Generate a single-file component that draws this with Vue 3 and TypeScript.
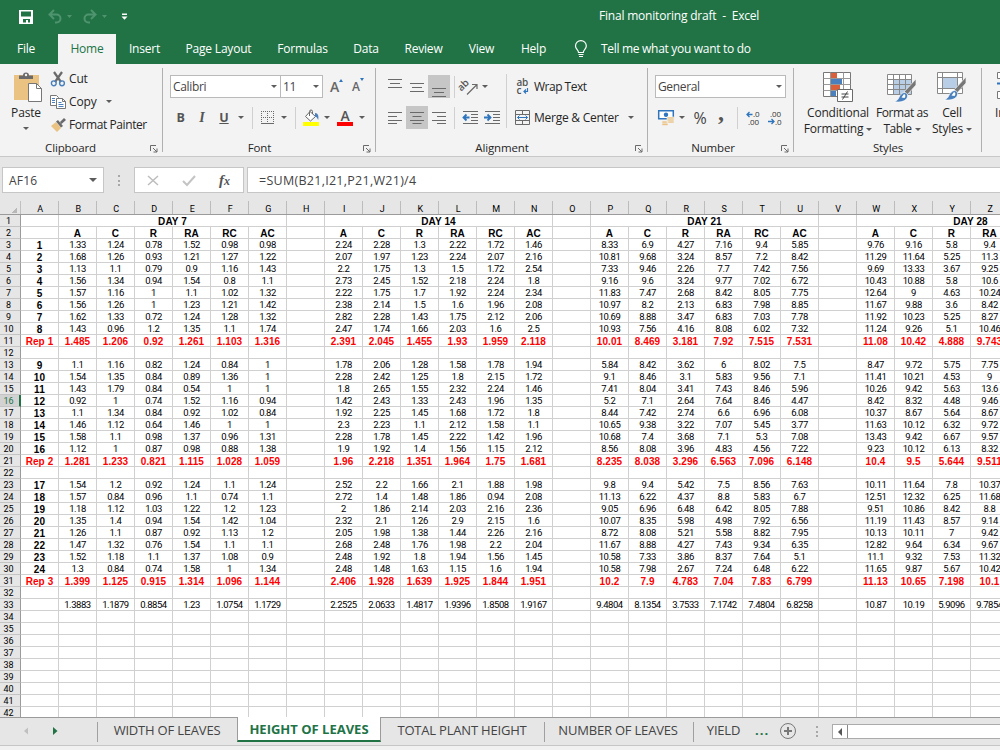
<template>
    <div class="excel">
        <header class="titlebar">
            <svg class="qat" width="140" height="34" viewBox="0 0 140 34">
                <path d="M19 10h14v14H19z" fill="#fff" />
                <path d="M21 11.500h10v5H21zM23 19h7v3.500h-2V20h-2v2.500h-3z" fill="#217346" />
                <g fill="none" stroke="#4f946e" stroke-width="2">
                    <path d="M54 10l-4.500 4.500L54 19M50 14.500h6.500a4 4 0 0 1 0 8H55" />
                    <path d="M91 10l4.500 4.500L91 19M95 14.500h-6.500a4 4 0 0 0 0 8H90" />
                </g>
                <path d="M67 15h5l-2.500 3zM102 15h5l-2.500 3z" fill="#4f946e" />
                <path d="M122 13.500h5v1.500h-5zM121.500 16.500h6l-3 3.300z" fill="#fff" />
            </svg>
            <span class="title">Final monitoring draft&nbsp; -&nbsp; Excel</span>
        </header>

        <nav class="tabs">
            <span v-for="tab in tabs" :key="tab.name" class="tab" :class="{ active: tab.name === 'Home' }" :style="{ width: tab.width + 'px' }">{{ tab.name }}</span>
            <svg class="bulb" width="14" height="18" viewBox="0 0 14 18" fill="none" stroke="#fff" stroke-width="1.200">
                <path d="M4.500 12.500c0-2.500-3-3.200-3-6.500a5.300 5.300 0 0 1 10.800 0c0 3.300-3 4-3 6.500zM4.500 14.500h5M5 16.500h4" />
            </svg>
            <span class="tell">Tell me what you want to do</span>
        </nav>

        <section class="ribbon">
            <div class="group clipboard">
                <div class="body">
                    <div class="paste">
                        <svg width="30" height="31" viewBox="0 0 30 31">
                            <path d="M1 3h25v25H1z" fill="#eac282" />
                            <path d="M6 7V3.500h4a3 3 0 0 1 6 0h4V7z" fill="#6a6a6a" />
                            <circle cx="13" cy="3" r="1.200" fill="#f3f3f3" />
                            <path d="M15.500 11.500h8l5 5v13h-13z" fill="#fff" stroke="#777" />
                            <path d="M23.500 11.500v5h5" fill="none" stroke="#777" />
                        </svg>
                        <span>Paste</span>
                        <i class="caret"></i>
                    </div>
                    <div class="clip-list">
                        <div class="clip-item">
                            <svg width="16" height="16" viewBox="0 0 16 16" fill="none">
                                <path d="M4 1l7 10M12 1L5 11" stroke="#6a6a6a" stroke-width="2.200" />
                                <circle cx="3.800" cy="12.300" r="2.400" stroke="#4a80bd" stroke-width="1.400" />
                                <circle cx="12" cy="12.300" r="2.400" stroke="#4a80bd" stroke-width="1.400" />
                            </svg>
                            <span>Cut</span>
                        </div>
                        <div class="clip-item">
                            <svg width="16" height="16" viewBox="0 0 16 16" stroke="#777" fill="#fff">
                                <path d="M.5 1.500h6l2 2v8h-8z" />
                                <path d="M6.500 4.500h6l3 3v7h-9z" />
                                <path d="M12.500 4.500v3h3" fill="none" />
                                <path d="M2 4.500h3M2 6.500h3M2 8.500h3M8.500 8.500h3M8.500 10.500h5M8.500 12.500h5" stroke="#4a80bd" />
                            </svg>
                            <span>Copy</span>
                            <i class="caret copy-caret"></i>
                        </div>
                        <div class="clip-item">
                            <svg width="16" height="16" viewBox="0 0 16 16">
                                <path d="M1 9l5-4 5 6-4 4z" fill="#eac282" />
                                <path d="M6 4.500l2-1.500 5 6-2 1.500zM10 5l4-4 2 2-4.500 4z" fill="#6a6a6a" />
                            </svg>
                            <span class="painter">Format Painter</span>
                        </div>
                    </div>
                </div>
                <div class="foot"><span>Clipboard</span><svg class="launcher" viewBox="0 0 8 8"><path d="M.5 6V.5H6M3 3l4 4M7 3.500V7H3.500" /></svg></div>
            </div>

            <div class="group font">
                <div class="body stack">
                    <div class="row">
                        <div class="combo face">Calibri<i class="caret"></i></div>
                        <div class="combo size">11<i class="caret"></i></div>
                        <span class="grow">A<i class="up"></i></span>
                        <span class="grow shrink">A<i class="down"></i></span>
                    </div>
                    <div class="row">
                        <b class="c w21">B</b>
                        <b class="c w22 italic">I</b>
                        <b class="c w22 underline">U</b>
                        <span class="c w12"><i class="caret"></i></span>
                        <span class="c w11"><i class="vline"></i></span>
                        <span class="c w20">
                            <svg width="14" height="14" viewBox="0 0 14 14" fill="none" stroke="#6a6a6a">
                                <path d="M.5 0v12M6.500 0v12M12.500 0v12M0 .5h13M0 6.500h13" stroke-dasharray="1 1" />
                                <path d="M0 12.500h13" />
                            </svg>
                        </span>
                        <span class="c w12"><i class="caret"></i></span>
                        <span class="c w11"><i class="vline"></i></span>
                        <span class="c w20">
                            <svg width="16" height="17" viewBox="0 0 16 17">
                                <path d="M7 2.500l5.500 5-5 4.500-5-4.500z" fill="#fff" stroke="#6a6a6a" />
                                <path d="M6.500 7V2.500a1.500 1.500 0 0 1 3 0V5" fill="none" stroke="#6a6a6a" />
                                <path d="M12 4c3 0 4 3 3.200 7-1-2-1.200-3-3.200-3.500z" fill="#4a80bd" />
                                <path d="M0 13h16v4H0z" fill="#ffff00" />
                            </svg>
                        </span>
                        <span class="c w12"><i class="caret"></i></span>
                        <span class="c w24"><span class="colour">A</span></span>
                        <span class="c w9"><i class="caret"></i></span>
                    </div>
                </div>
                <div class="foot"><span>Font</span><svg class="launcher" viewBox="0 0 8 8"><path d="M.5 6V.5H6M3 3l4 4M7 3.500V7H3.500" /></svg></div>
            </div>

            <div class="group align">
                <div class="body">
                    <div class="stack align-left">
                        <div class="row">
                            <span v-for="(d, i) in vAlign" :key="i" class="c w22 tall" :class="{ on: i === 2 }">
                                <svg width="14" height="21" viewBox="0 0 14 21" fill="none" stroke="#6a6a6a"><path :d="d" /></svg>
                            </span>
                            <span class="c w9"><i class="vline"></i></span>
                            <span class="c w21">
                                <svg width="18" height="17" viewBox="0 0 18 17">
                                    <text class="svg-ab" x="0" y="13" transform="rotate(-45 1 13)">ab</text>
                                    <path d="M6 16.500l9.500-9.500M11 6.500h5V11" fill="none" stroke="#6a6a6a" stroke-width="1.200" />
                                </svg>
                            </span>
                            <span class="c w9"><i class="caret"></i></span>
                        </div>
                        <div class="row">
                            <span v-for="(d, i) in hAlign" :key="i" class="c w22 tall" :class="{ on: i === 1 }">
                                <svg width="14" height="13" viewBox="0 0 14 13" fill="none" stroke="#6a6a6a"><path :d="d" /></svg>
                            </span>
                            <span class="c w9"><i class="vline"></i></span>
                            <span v-for="(d, i) in indent" :key="'n' + i" class="c w22">
                                <svg width="17" height="13" viewBox="0 0 17 13" fill="none">
                                    <path d="M1 .5h15M9 3.500h7M9 6.500h7M9 9.500h7M1 12.500h15" stroke="#6a6a6a" />
                                    <path :d="d" stroke="#2f75bd" stroke-width="1.800" />
                                </svg>
                            </span>
                        </div>
                    </div>
                    <div class="stack align-right">
                        <div class="row">
                            <svg width="16" height="17" viewBox="0 0 16 17">
                                <text class="svg-ab" x="1.500" y="8">ab</text>
                                <text class="svg-ab" x="1.500" y="15.500">c</text>
                                <path d="M12.500 10v3.500H9M11 11.500l-2 2 2 2" fill="none" stroke="#2f75bd" stroke-width="1.200" />
                            </svg>
                            <span class="label wrap">Wrap Text</span>
                        </div>
                        <div class="row">
                            <svg width="16" height="15" viewBox="0 0 16 15" fill="none" stroke="#6a6a6a">
                                <path d="M.5.5h14v14H.5zM.5 4.500h14M.5 10.500h14M7.500.5v4M7.500 10.500v4" />
                                <path d="M2.500 7.500h10M4.500 5.500l-2 2 2 2M10.500 5.500l2 2-2 2" stroke="#2f75bd" />
                            </svg>
                            <span class="label merge">Merge &amp; Center</span>
                            <i class="caret merge-caret"></i>
                        </div>
                    </div>
                </div>
                <div class="foot"><span>Alignment</span><svg class="launcher" viewBox="0 0 8 8"><path d="M.5 6V.5H6M3 3l4 4M7 3.500V7H3.500" /></svg></div>
            </div>

            <div class="group number">
                <div class="body stack">
                    <div class="row">
                        <div class="combo general">General<i class="caret"></i></div>
                    </div>
                    <div class="row">
                        <span class="c w22">
                            <svg width="17" height="17" viewBox="0 0 17 17">
                                <path d="M.7 1.700h14.600v8H.7z" fill="#fff" stroke="#2f75bd" stroke-width="1.500" />
                                <circle cx="8" cy="5.700" r="2.200" fill="#2f75bd" />
                                <path d="M9 8h7v6H9zM4 12h6v4.500H4z" fill="#eac282" stroke="#f3f3f3" stroke-width=".6" />
                                <path d="M9 10h7M9 12h7M4 14.200h6" stroke="#f3f3f3" stroke-width=".7" />
                            </svg>
                        </span>
                        <span class="c w10"><i class="caret"></i></span>
                        <span class="c w26 percent">%</span>
                        <span class="c w16 comma">,</span>
                        <span class="c w16"><i class="vline"></i></span>
                        <span class="c w15">
                            <svg width="16" height="16" viewBox="0 0 16 16">
                                <text class="svg-num" x="8" y="7">.0</text><text class="svg-num" x="3" y="14.500">.00</text>
                                <path d="M7.500 4.500H2M4.500 2L2 4.500 4.500 7" fill="none" stroke="#2f75bd" stroke-width="1.300" />
                            </svg>
                        </span>
                        <span class="c w29">
                            <svg width="16" height="16" viewBox="0 0 16 16">
                                <text class="svg-num" x="3" y="7">.00</text><text class="svg-num" x="8" y="14.500">.0</text>
                                <path d="M1 11.500h6M4.500 9L7 11.500 4.500 14" fill="none" stroke="#2f75bd" stroke-width="1.300" />
                            </svg>
                        </span>
                    </div>
                </div>
                <div class="foot"><span>Number</span><svg class="launcher" viewBox="0 0 8 8"><path d="M.5 6V.5H6M3 3l4 4M7 3.500V7H3.500" /></svg></div>
            </div>

            <div class="group styles">
                <div class="body">
                    <div class="big cond">
                        <svg width="30" height="31" viewBox="0 0 30 31">
                            <path d="M.5.5h27v24H.5z" fill="#fff" stroke="#777" />
                            <path d="M.5 6.500h27M.5 12.500h27M.5 18.500h27M7.500.5v24M20.500.5v24" stroke="#999" />
                            <path d="M8 1h6v5H8zM8 13h9v5H8z" fill="#d9603b" />
                            <path d="M8 7h11v5H8zM8 19h5v5H8z" fill="#4a80bd" />
                            <path d="M14.500 17.500h15v12h-15z" fill="#fff" stroke="#6a6a6a" />
                            <path d="M18.500 22h7M18.500 25h7M24.500 19.500l-5 8" stroke="#444" fill="none" />
                        </svg>
                        <span>Conditional</span>
                        <span class="line2">Formatting<i class="caret"></i></span>
                    </div>
                    <div class="big fmt">
                        <svg width="30" height="31" viewBox="0 0 30 31">
                            <path d="M.5 2.500h24v20H.5z" fill="#fff" />
                            <path d="M6.500 7.500h18v15h-18z" fill="#b8cde6" />
                            <path d="M.5 2.500h24v20H.5zM.5 7.500h24M.5 12.500h24M.5 17.500h24M6.500 2.500v20M12.500 2.500v20M18.500 2.500v20" fill="none" stroke="#888" />
                            <path d="M29 7v6l-9 10-3-3z" fill="#777" stroke="#f3f3f3" stroke-width=".7" />
                            <path d="M18 20.500c3 1 3.500 4 1 7-3.500 3-8 2.500-12 2.500 4-1.500 4-3 6-6.500 1.500-2 3-3 5-3z" fill="#4a80bd" stroke="#fff" stroke-width=".7" />
                            <path d="M17 22c2 1 1.500 2.500.5 4l-3-.5z" fill="#fff" />
                        </svg>
                        <span>Format as</span>
                        <span class="line2">Table<i class="caret"></i></span>
                    </div>
                    <div class="big cell-styles">
                        <svg width="30" height="31" viewBox="0 0 30 31">
                            <path d="M.5.5h25v21H.5z" fill="#fff" />
                            <path d="M5.500 5.500h15v11h-15z" fill="#b8cde6" />
                            <path d="M.5.5h25v21H.5zM.5 5.500h25M.5 16.500h25M5.500.5v21M20.500.5v21" fill="none" stroke="#888" />
                            <path d="M29 5v6l-9 10-3-3z" fill="#777" stroke="#f3f3f3" stroke-width=".7" />
                            <path d="M18 18.500c3 1 3.500 4 1 7-3.500 3-8 2.500-12 2.500 4-1.500 4-3 6-6.500 1.500-2 3-3 5-3z" fill="#4a80bd" stroke="#fff" stroke-width=".7" />
                            <path d="M17 20c2 1 1.500 2.500.5 4l-3-.5z" fill="#fff" />
                        </svg>
                        <span>Cell</span>
                        <span class="line2">Styles<i class="caret"></i></span>
                    </div>
                </div>
                <div class="foot"><span>Styles</span></div>
            </div>

            <div class="group cells">
                <div class="big insert">
                    <svg width="30" height="31" viewBox="0 0 30 31" fill="#fff" stroke="#777">
                        <path d="M.5.5h27v6H.5zM.5 19.500h27v7H.5z" />
                        <path d="M0 11.500h6" stroke="#2f75bd" stroke-width="2" />
                    </svg>
                    <span>Insert</span>
                </div>
            </div>
        </section>

        <section class="formula-bar">
            <div class="name-box">AF16<i class="caret wide"></i></div>
            <i class="dots"></i>
            <div class="fx-buttons">
                <svg width="108" height="24" viewBox="0 0 108 24" fill="none">
                    <path d="M13 8l10 9M23 8l-10 9" stroke="#bdbdbd" stroke-width="1.500" />
                    <path d="M48 13l4 4 8-9" stroke="#c4c4c4" stroke-width="2" />
                    <text class="svg-fx" x="84" y="17">f</text>
                    <text class="svg-fx small" x="89" y="17">x</text>
                </svg>
            </div>
            <div class="formula">=SUM(B21,I21,P21,W21)/4</div>
        </section>

        <main class="sheet">
            <div class="sheet-row head">
                <div class="corner"></div>
                <div v-for="c in letters" :key="c" class="col-head">{{ c }}</div>
            </div>
            <div v-for="row in rows" :key="row.n" class="sheet-row" :class="{ rep: row.rep, names: row.n === 2 }">
                <div class="row-head" :class="{ current: row.n === 16 }">{{ row.n }}</div>
                <template v-if="row.n === 1">
                    <div class="cell"></div>
                    <template v-for="day in days" :key="day">
                        <div class="cell merged">{{ day }}</div>
                        <div class="cell"></div>
                    </template>
                </template>
                <template v-else>
                    <div v-for="(v, i) in row.cells" :key="i" class="cell" :class="{ id: i === 0 }">{{ v }}</div>
                </template>
            </div>
        </main>

        <footer class="sheet-tabs">
            <svg class="arrows" width="97" height="28" viewBox="0 0 97 28">
                <path d="M28 9.500v7l-4-3.500z" fill="#c0c0c0" />
                <path d="M53 9v8l4.500-4z" fill="#217346" />
            </svg>
            <span class="st first">WIDTH OF LEAVES</span>
            <span class="st current">HEIGHT OF LEAVES</span>
            <span class="st total">TOTAL PLANT HEIGHT</span>
            <span class="st count">NUMBER OF LEAVES</span>
            <span class="st yield">YIELD</span>
            <b class="more">...</b>
            <svg class="plus" width="18" height="18" viewBox="0 0 18 18" fill="none" stroke="#777">
                <circle cx="9" cy="9" r="7.500" />
                <path d="M9 5v8M5 9h8" stroke-width="2" />
            </svg>
            <i class="dots tab-dots"></i>
            <div class="scroll"><span class="scroll-btn"><i></i></span></div>
        </footer>
        <div class="status"></div>
    </div>
</template>

<script setup lang="ts">
interface SheetRow {
    n: number;
    rep: boolean;
    cells: string[];
}

const tabs = [
    { name: "File", width: 52 },
    { name: "Home", width: 58 },
    { name: "Insert", width: 57 },
    { name: "Page Layout", width: 91 },
    { name: "Formulas", width: 77 },
    { name: "Data", width: 50 },
    { name: "Review", width: 65 },
    { name: "View", width: 51 },
    { name: "Help", width: 53 },
];

const vAlign = [
    "M0 3.500h14M2 7.500h10M0 11.500h14",
    "M0 7.500h14M2 11.500h10M0 15.500h14",
    "M0 12.500h14M2 16.500h10M0 20.500h14",
];
const hAlign = [
    "M0 1.500h14M0 5.500h9M0 9.500h14M0 12.500h9",
    "M0 1.500h14M2.500 5.500h9M0 9.500h14M2.500 12.500h9",
    "M0 1.500h14M5 5.500h9M0 9.500h14M5 12.500h9",
];
const indent = ["M7.500 6.500H1.500M4.500 3.500l-3 3 3 3", "M0 6.500h6.500M3.500 3.500l3 3-3 3"];

const letters = "ABCDEFGHIJKLMNOPQRSTUVWXYZ".split("");
const days = ["DAY 7", "DAY 14", "DAY 21", "DAY 28"];

// fila -> id | day 7 | day 14 | day 21 | day 28
const data: Record<number, string> = {
    2: "|A C R RA RC AC|A C R RA RC AC|A C R RA RC AC|A C R RA",
    3: "1|1.33 1.24 0.78 1.52 0.98 0.98|2.24 2.28 1.3 2.22 1.72 1.46|8.33 6.9 4.27 7.16 9.4 5.85|9.76 9.16 5.8 9.4",
    4: "2|1.68 1.26 0.93 1.21 1.27 1.22|2.07 1.97 1.23 2.24 2.07 2.16|10.81 9.68 3.24 8.57 7.2 8.42|11.29 11.64 5.25 11.3",
    5: "3|1.13 1.1 0.79 0.9 1.16 1.43|2.2 1.75 1.3 1.5 1.72 2.54|7.33 9.46 2.26 7.7 7.42 7.56|9.69 13.33 3.67 9.25",
    6: "4|1.56 1.34 0.94 1.54 0.8 1.1|2.73 2.45 1.52 2.18 2.24 1.8|9.16 9.6 3.24 9.77 7.02 6.72|10.43 10.88 5.8 10.6",
    7: "5|1.57 1.16 1 1.1 1.02 1.32|2.22 1.75 1.7 1.92 2.24 2.34|11.83 7.47 2.68 8.42 8.05 7.75|12.64 9 4.63 10.24",
    8: "6|1.56 1.26 1 1.23 1.21 1.42|2.38 2.14 1.5 1.6 1.96 2.08|10.97 8.2 2.13 6.83 7.98 8.85|11.67 9.88 3.6 8.42",
    9: "7|1.62 1.33 0.72 1.24 1.28 1.32|2.82 2.28 1.43 1.75 2.12 2.06|10.69 8.88 3.47 6.83 7.03 7.78|11.92 10.23 5.25 8.27",
    10: "8|1.43 0.96 1.2 1.35 1.1 1.74|2.47 1.74 1.66 2.03 1.6 2.5|10.93 7.56 4.16 8.08 6.02 7.32|11.24 9.26 5.1 10.46",
    11: "Rep 1|1.485 1.206 0.92 1.261 1.103 1.316|2.391 2.045 1.455 1.93 1.959 2.118|10.01 8.469 3.181 7.92 7.515 7.531|11.08 10.42 4.888 9.743",
    13: "9|1.1 1.16 0.82 1.24 0.84 1|1.78 2.06 1.28 1.58 1.78 1.94|5.84 8.42 3.62 6 8.02 7.5|8.47 9.72 5.75 7.75",
    14: "10|1.54 1.35 0.84 0.89 1.36 1|2.28 2.42 1.25 1.8 2.15 1.72|9.1 8.46 3.1 5.83 9.56 7.1|11.41 10.21 4.53 9",
    15: "11|1.43 1.79 0.84 0.54 1 1|1.8 2.65 1.55 2.32 2.24 1.46|7.41 8.04 3.41 7.43 8.46 5.96|10.26 9.42 5.63 13.6",
    16: "12|0.92 1 0.74 1.52 1.16 0.94|1.42 2.43 1.33 2.43 1.96 1.35|5.2 7.1 2.64 7.64 8.46 4.47|8.42 8.32 4.48 9.46",
    17: "13|1.1 1.34 0.84 0.92 1.02 0.84|1.92 2.25 1.45 1.68 1.72 1.8|8.44 7.42 2.74 6.6 6.96 6.08|10.37 8.67 5.64 8.67",
    18: "14|1.46 1.12 0.64 1.46 1 1|2.3 2.23 1.1 2.12 1.58 1.1|10.65 9.38 3.22 7.07 5.45 3.77|11.63 10.12 6.32 9.72",
    19: "15|1.58 1.1 0.98 1.37 0.96 1.31|2.28 1.78 1.45 2.22 1.42 1.96|10.68 7.4 3.68 7.1 5.3 7.08|13.43 9.42 6.67 9.57",
    20: "16|1.12 1 0.87 0.98 0.88 1.38|1.9 1.92 1.4 1.56 1.15 2.12|8.56 8.08 3.96 4.83 4.56 7.22|9.23 10.12 6.13 8.32",
    21: "Rep 2|1.281 1.233 0.821 1.115 1.028 1.059|1.96 2.218 1.351 1.964 1.75 1.681|8.235 8.038 3.296 6.563 7.096 6.148|10.4 9.5 5.644 9.511",
    23: "17|1.54 1.2 0.92 1.24 1.1 1.24|2.52 2.2 1.66 2.1 1.88 1.98|9.8 9.4 5.42 7.5 8.56 7.63|10.11 11.64 7.8 10.37",
    24: "18|1.57 0.84 0.96 1.1 0.74 1.1|2.72 1.4 1.48 1.86 0.94 2.08|11.13 6.22 4.37 8.8 5.83 6.7|12.51 12.32 6.25 11.68",
    25: "19|1.18 1.12 1.03 1.22 1.2 1.23|2 1.86 2.14 2.03 2.16 2.36|9.05 6.96 6.48 6.42 8.05 7.88|9.51 10.86 8.42 8.8",
    26: "20|1.35 1.4 0.94 1.54 1.42 1.04|2.32 2.1 1.26 2.9 2.15 1.6|10.07 8.35 5.98 4.98 7.92 6.56|11.19 11.43 8.57 9.14",
    27: "21|1.26 1.1 0.87 0.92 1.13 1.2|2.05 1.98 1.38 1.44 2.26 2.16|8.72 8.08 5.21 5.58 8.82 7.95|10.13 10.11 7 9.42",
    28: "22|1.47 1.32 0.76 1.54 1.1 1.1|2.68 2.48 1.76 1.98 2.2 2.04|11.67 8.88 4.27 7.43 9.34 6.35|12.82 9.64 6.34 9.67",
    29: "23|1.52 1.18 1.1 1.37 1.08 0.9|2.48 1.92 1.8 1.94 1.56 1.45|10.58 7.33 3.86 8.37 7.64 5.1|11.1 9.32 7.53 11.32",
    30: "24|1.3 0.84 0.74 1.58 1 1.34|2.48 1.48 1.63 1.15 1.6 1.94|10.58 7.98 2.67 7.24 6.48 6.22|11.65 9.87 5.67 10.42",
    31: "Rep 3|1.399 1.125 0.915 1.314 1.096 1.144|2.406 1.928 1.639 1.925 1.844 1.951|10.2 7.9 4.783 7.04 7.83 6.799|11.13 10.65 7.198 10.1",
    33: "|1.3883 1.1879 0.8854 1.23 1.0754 1.1729|2.2525 2.0633 1.4817 1.9396 1.8508 1.9167|9.4804 8.1354 3.7533 7.1742 7.4804 6.8258|10.87 10.19 5.9096 9.7854",
};

// one empty column sits between two day blocks
const toCells = (line?: string): string[] => {
    if (!line) return Array(26).fill("");
    const [id, ...blocks] = line.split("|");
    const cells = [id];
    blocks.forEach((block, i) => {
        if (i > 0) cells.push("");
        cells.push(...block.split(" "));
    });
    return cells;
};

const rows: SheetRow[] = Array.from({ length: 42 }, (_, i) => ({
    n: i + 1,
    rep: [11, 21, 31].includes(i + 1),
    cells: toCells(data[i + 1]),
}));
</script>

<style>
body {
    background: #f1f1f1;
    overflow: hidden;
}
</style>

<style scoped>
.excel {
    width: 1000px;
    height: 750px;
    overflow: hidden;
    display: flex;
    flex-direction: column;
    font-family: "Open Sans", "Noto Sans", sans-serif;
    font-size: 12px;
    letter-spacing: -0.15px;
    color: #262626;
    background: #e6e6e6;
    white-space: nowrap;
}

.excel * {
    box-sizing: border-box;
}

svg {
    display: block;
    flex: none;
    overflow: visible;
}

.titlebar {
    height: 34px;
    flex: none;
    display: flex;
    background: #217346;
    color: #fff;
}

.title {
    margin-left: 459px;
    line-height: 32px;
    letter-spacing: -0.2px;
}

.tabs {
    height: 30px;
    flex: none;
    display: flex;
    background: #217346;
    color: #fff;
    line-height: 30px;
}

.tab {
    text-align: center;
    letter-spacing: -0.2px;
}

.tab.active {
    margin-left: 6px;
    background: #f3f3f3;
    color: #217346;
}

.bulb {
    margin: 6px 0 0 14px;
}

.tell {
    margin-left: 13px;
    letter-spacing: -0.3px;
}

.ribbon {
    height: 93px;
    flex: none;
    display: flex;
    background: #f3f3f3;
    border-bottom: 1px solid #c8c8c8;
}

.group {
    display: flex;
    flex-direction: column;
    flex: none;
    background: linear-gradient(#b0b0b0, #b0b0b0) right 4px / 1px 84px no-repeat;
}

.body {
    height: 76px;
    display: flex;
}

.foot {
    height: 16px;
    line-height: 16px;
    display: flex;
    justify-content: center;
    font-size: 11.5px;
    position: relative;
}

.launcher {
    position: absolute;
    right: 5px;
    top: 5px;
    width: 8px;
    height: 8px;
    fill: none;
    stroke: #6a6a6a;
}

.caret {
    display: inline-block;
    flex: none;
    width: 0;
    height: 0;
    border: 3px solid transparent;
    border-top: 3px solid #5c5c5c;
    border-bottom: 0;
}

.caret.wide {
    border-width: 4px 4px 0;
}

.clipboard {
    width: 163px;
}

.clipboard .foot {
    padding-right: 22px;
}

.paste {
    width: 48px;
    padding: 8px 0 0 4px;
    display: flex;
    flex-direction: column;
    align-items: center;
}

.paste svg {
    margin-left: 4px;
}

.paste span {
    line-height: 20px;
}

.paste .caret {
    margin-top: 4px;
}

.clip-list {
    padding: 3px 0 0 2px;
}

.clip-item {
    height: 23px;
    display: flex;
    align-items: center;
    gap: 3px;
}

.copy-caret {
    margin-left: 6px;
}

.painter {
    letter-spacing: -0.42px;
}

.stack {
    display: flex;
    flex-direction: column;
    gap: 8px;
    padding-top: 11px;
}

.row {
    height: 23px;
    display: flex;
    align-items: center;
}

.c {
    display: flex;
    align-items: center;
    justify-content: center;
    flex: none;
}

.tall {
    height: 23px;
}

.on {
    background: #c6c6c6;
}

.w9 { width: 9px; }
.w10 { width: 10px; }
.w11 { width: 11px; }
.w12 { width: 12px; }
.w15 { width: 15px; }
.w16 { width: 16px; }
.w20 { width: 20px; }
.w21 { width: 21px; }
.w22 { width: 22px; }
.w24 { width: 24px; }
.w26 { width: 26px; }
.w29 { width: 29px; }

.vline {
    width: 1px;
    height: 22px;
    background: #d0d0d0;
}

.combo {
    height: 23px;
    line-height: 20px;
    display: flex;
    align-items: center;
    justify-content: space-between;
    padding: 0 3px 0 2px;
    background: #fff;
    border: 1px solid #bababa;
    letter-spacing: -0.35px;
    color: #444;
}

.font {
    width: 213px;
}

.font .stack {
    padding-left: 7px;
}

.font .foot {
    padding-right: 20px;
}

.font b {
    height: 20px;
    color: #555;
    font-size: 12.5px;
    line-height: 18px;
}

.face {
    width: 111px;
}

.size {
    width: 43px;
    margin-left: -1px;
}

b.italic {
    font-family: "Liberation Serif", serif;
    font-size: 14px;
    font-style: italic;
}

.underline {
    text-decoration: underline;
}

.grow {
    margin-left: 7px;
    display: flex;
    align-items: center;
    font-size: 14px;
    font-weight: 600;
    color: #666;
}

.shrink {
    margin-left: 9px;
    font-size: 12px;
}

.up,
.down {
    align-self: flex-start;
    margin-top: 2px;
    border: 2.5px solid transparent;
}

.up {
    border-top: 0;
    border-bottom: 3px solid #2f75bd;
}

.down {
    margin-top: 0;
    border-bottom: 0;
    border-top: 3px solid #2f75bd;
}

.colour {
    width: 16px;
    height: 17px;
    line-height: 13px;
    text-align: center;
    font-size: 14px;
    font-weight: 600;
    color: #555;
    border-bottom: 4px solid #ff0000;
}

.align {
    width: 272px;
}

.align .foot {
    padding-right: 20px;
}

.align-left {
    width: 131px;
    padding-left: 8px;
    background: linear-gradient(#d0d0d0, #d0d0d0) right 10px / 1px 54px no-repeat;
}

.align-right {
    padding-left: 8px;
}

.label {
    margin-left: 3px;
}

.wrap {
    letter-spacing: -0.5px;
}

.merge {
    letter-spacing: -0.25px;
}

.merge-caret {
    margin-left: 9px;
}

.svg-ab {
    font: 600 10px "Open Sans", sans-serif;
    letter-spacing: -0.2px;
    fill: #555;
}

.svg-num {
    font: 8px "Open Sans", sans-serif;
    fill: #333;
}

.number {
    width: 146px;
}

.number .stack {
    padding-left: 7px;
}

.number .foot {
    padding-right: 16px;
}

.general {
    width: 131px;
}

.percent {
    font-size: 16px;
    color: #444;
}

.comma {
    font-family: "Liberation Serif", serif;
    font-size: 24px;
    font-weight: 700;
    line-height: 10px;
    padding-bottom: 12px;
    color: #555;
}

.styles {
    width: 188px;
}

.styles .body {
    padding-left: 7px;
}

.big {
    display: flex;
    flex-direction: column;
    align-items: center;
    padding-top: 8px;
    line-height: 16px;
    letter-spacing: -0.2px;
}

.big svg {
    margin-bottom: 2px;
}

.line2 {
    display: flex;
    align-items: center;
    gap: 3px;
}

.cond { width: 74px; }

.fmt {
    width: 54px;
    letter-spacing: -0.45px;
}

.cell-styles { width: 46px; }

.cells {
    background: none;
    width: 60px;
}

.insert {
    align-items: flex-start;
    padding-left: 15px;
}

.insert span {
    margin-left: -2px;
}

.formula-bar {
    height: 44px;
    flex: none;
    display: flex;
    padding: 10px 0 0 2px;
}

.name-box,
.fx-buttons,
.formula {
    height: 26px;
    background: #fff;
    border: 1px solid #c6c6c6;
    line-height: 25px;
    color: #444;
}

.name-box {
    width: 102px;
    padding: 0 6px;
    display: flex;
    align-items: center;
    justify-content: space-between;
    letter-spacing: 0.2px;
}

.dots {
    width: 2px;
    height: 11px;
    margin: 8px 14px 0;
    background: repeating-linear-gradient(#a8a8a8 0 2px, transparent 2px 4.5px);
}

.fx-buttons {
    width: 110px;
}

.formula {
    flex: 1;
    margin-left: 3px;
    padding-left: 11px;
    border-right: 0;
    font-size: 12.5px;
    letter-spacing: 0.28px;
}

.svg-fx {
    font: italic bold 15px "Liberation Serif", serif;
    fill: #555;
}

.svg-fx.small {
    font-size: 12px;
}

.sheet {
    height: 516px;
    flex: none;
    overflow: hidden;
    background: #fff;
    font-family: Roboto, "Liberation Sans", sans-serif;
    font-size: 9.5px;
    letter-spacing: -0.45px;
    color: #000;
}

.sheet-row {
    width: 1100px;
    height: 12px;
    display: flex;
    line-height: 12px;
    text-align: center;
}

.sheet-row.head {
    height: 14px;
    background: #e6e6e6;
    border-bottom: 1px solid #9b9b9b;
    font-size: 9px;
    line-height: 16px;
}

.corner {
    width: 21px;
    flex: none;
    border-right: 1px solid #c0c0c0;
    background: linear-gradient(135deg, transparent 50%, #b8b8b8 50%) 11px 7px / 6px 5px no-repeat;
}

.col-head {
    width: 38px;
    flex: none;
    padding-left: 1px;
    border-right: 1px solid #bcbcbc;
}

.row-head {
    width: 21px;
    flex: none;
    padding-right: 3px;
    background: #e6e6e6;
    border-right: 1px solid #9b9b9b;
    border-bottom: 1px solid #c4c4c4;
    font-size: 9px;
    font-weight: 400;
    line-height: 13px;
    letter-spacing: 0;
    color: #000;
}

.row-head.current {
    padding-right: 2px;
    background: #d2d2d2;
    border-right: 2px solid #217346;
    color: #217346;
}

.cell {
    width: 38px;
    flex: none;
    border-right: 1px solid #d0d0d0;
    border-bottom: 1px solid #d0d0d0;
}

.merged {
    width: 228px;
}

.merged,
.names .cell,
.id,
.rep .cell {
    font-family: "Liberation Sans", sans-serif;
    font-size: 10px;
    font-weight: 700;
    line-height: 13px;
    letter-spacing: 0.1px;
}

.rep .cell {
    color: #ff0000;
}

.sheet-tabs {
    height: 29px;
    flex: none;
    display: flex;
    border-top: 1px solid #9b9b9b;
    border-bottom: 1px solid #c6c6c6;
    font-size: 13px;
    line-height: 25px;
    color: #444;
}

.st {
    flex: none;
    text-align: center;
    letter-spacing: -0.2px;
    background: linear-gradient(#a0a0a0, #a0a0a0) right 4px / 1px 20px no-repeat;
}

.first {
    width: 140px;
    background: linear-gradient(#a0a0a0, #a0a0a0) left 4px / 1px 20px no-repeat;
}

.st.current {
    width: 144px;
    height: 25px;
    margin-top: -1px;
    background: #fff;
    border: 1px solid #9b9b9b;
    border-top: 0;
    border-bottom: 2px solid #217346;
    color: #217346;
    font-weight: 700;
    letter-spacing: 0;
}

.total {
    width: 164px;
    padding-right: 2px;
}

.count {
    width: 149px;
    padding-right: 3px;
}

.yield {
    width: 59px;
    background: none;
}

.more {
    margin-left: 2px;
    line-height: 24px;
    color: #217346;
    letter-spacing: 1px;
}

.plus {
    margin: 4px 0 0 10px;
}

.tab-dots {
    margin: 8px 14px 0 19px;
}

.scroll {
    flex: 1;
    height: 15px;
    margin-top: 6px;
    background: #fff;
    border: 1px solid #ababab;
    border-right: 0;
}

.scroll-btn {
    width: 15px;
    height: 13px;
    display: flex;
    align-items: center;
    justify-content: center;
    border-right: 1px solid #8a8a8a;
}

.scroll-btn i {
    border: 4px solid transparent;
    border-left: 0;
    border-right: 4px solid #555;
}

.status {
    flex: 1;
    background: #f1f1f1;
}
</style>
